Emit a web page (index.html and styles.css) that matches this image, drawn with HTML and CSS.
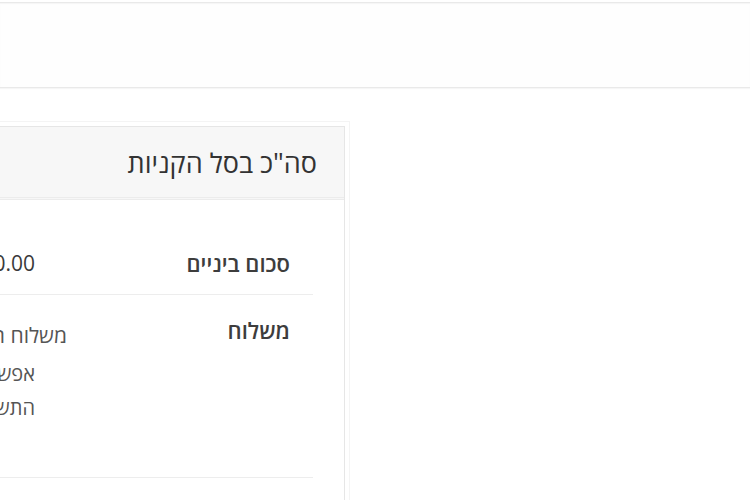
FILE: index.html
```html
<!DOCTYPE html>
<html lang="he" dir="rtl">
<head>
  <meta charset="UTF-8" />
  <meta name="viewport" content="width=device-width, initial-scale=1" />
  <title>סל הקניות</title>
  <link rel="stylesheet" href="styles.css">
</head>
<body>
  <div class="cart-actions"></div>

  <div class="cart-collaterals">
    <div class="cart-totals">
      <h2>סה"כ בסל הקניות</h2>
      <table class="totals-table">
        <tr class="subtotal">
          <th>סכום ביניים</th>
          <td><span class="amount">₪1,290.00</span></td>
        </tr>
        <tr class="shipping">
          <th>משלוח</th>
          <td>
            <ul class="shipping-methods">
              <li>משלוח חינם</li>
            </ul>
            <p class="shipping-note">אפשרויות משלוח יעודכנו במהלך התשלום.</p>
          </td>
        </tr>
        <tr class="order-total">
          <th>סה"כ</th>
          <td><strong class="amount">₪1,290.00</strong></td>
        </tr>
      </table>
      <div class="proceed">
        <a href="#" class="checkout-button">מעבר לתשלום</a>
      </div>
    </div>
  </div>
</body>
</html>
```

FILE: styles.css
```css
html, body {
  overflow: hidden;
}

body {
  margin: 0;
  font-family: 'Open Sans', 'DejaVu Sans', sans-serif;
  background: #ffffff;
  color: #333333;
}

.cart-actions {
  margin-top: 2px;
  height: 84px;
  background: #fefefe;
  border-top: 1px solid #e9e9e9;
  border-bottom: 1px solid #e9e9e9;
  box-shadow: 0 1px 1px #f6f6f6, inset 0 1px 1px #f6f6f6;
}

.cart-collaterals {
  padding-top: 38px;
}

.cart-totals {
  width: 640px;
  margin-right: 405px;
  background: #ffffff;
  border: 1px solid #e6e6e6;
  box-shadow: 0 0 0 4px #ffffff, 0 0 0 5px #f4f4f4;
}

.cart-totals h2 {
  margin: 0;
  padding: 18px 27px 16px;
  font-size: 27px;
  font-weight: 400;
  line-height: 36px;
  color: #333333;
  background: #f7f7f7;
  border-bottom: 3px double #ececec;
}

.totals-table {
  width: calc(100% - 62px);
  margin: 32px 31px 0;
  border-collapse: collapse;
}

.totals-table th,
.totals-table td {
  padding: 16px 24px;
  line-height: 30px;
  font-size: 21px;
  vertical-align: top;
  border-bottom: 1px solid #ededed;
}

.totals-table th {
  width: 130px;
  padding-right: 23px;
  text-align: right;
  font-size: 22px;
  font-weight: 600;
  color: #3d3d3d;
}

.totals-table td {
  text-align: right;
  padding-right: 101px;
  color: #3a3a3a;
}

.shipping th,
.shipping td {
  padding-top: 20px;
  padding-bottom: 20px;
}

.shipping-methods {
  list-style: none;
  margin: 0 -32px 0 0;
  padding: 0;
  line-height: 40px;
  color: #555555;
}

.shipping-note {
  margin: 2px 0 32px;
  font-size: 20px;
  line-height: 34px;
  color: #555555;
}

.order-total td,
.order-total th {
  border-bottom: none;
}

.proceed {
  padding: 10px 31px 30px;
}

.checkout-button {
  display: block;
  padding: 16px;
  text-align: center;
  font-size: 20px;
  color: #ffffff;
  background: #333333;
  text-decoration: none;
}
```
